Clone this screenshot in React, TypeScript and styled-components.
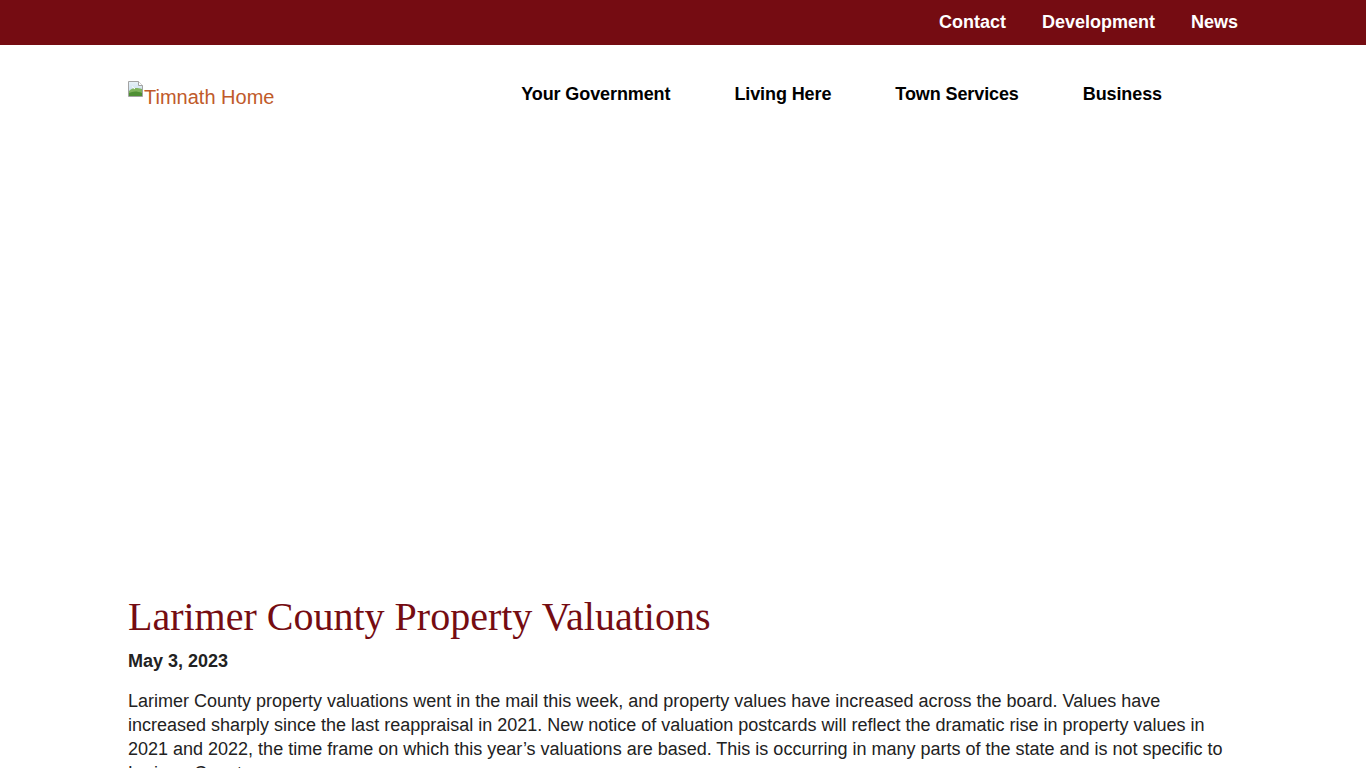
import React from 'react';
import styled, { createGlobalStyle } from 'styled-components';

const GlobalStyle = createGlobalStyle`
  html, body {
    margin: 0;
    padding: 0;
    background: #ffffff;
    font-family: 'Liberation Sans', Arial, sans-serif;
  }
  * {
    box-sizing: border-box;
  }
`;

const Container = styled.div`
  width: 1110px;
  margin: 0 auto;
`;

const TopBar = styled.div`
  height: 45px;
  background-color: #750c12;
`;

const TopLinks = styled(Container)`
  height: 100%;
  display: flex;
  justify-content: flex-end;
  align-items: center;
  gap: 36px;
  padding-bottom: 2px;
`;

const TopLink = styled.a`
  color: #ffffff;
  font-size: 18px;
  font-weight: 700;
  text-decoration: none;
  line-height: 1;
`;

const Header = styled(Container)`
  height: 95px;
  display: flex;
  align-items: flex-start;
  justify-content: space-between;
  padding-top: 36px;
`;

const Logo = styled.a`
  display: flex;
  align-items: flex-start;
  color: #c05a2a;
  font-size: 20px;
  text-decoration: none;
  line-height: 22px;
`;

const LogoAlt = styled.span`
  padding-top: 5px;
`;

const MainNav = styled.nav`
  display: flex;
  gap: 64px;
  margin-right: 76px;
  margin-top: 2px;
`;

const NavLink = styled.a`
  color: #000000;
  font-size: 18px;
  font-weight: 700;
  text-decoration: none;
  line-height: 22px;
  letter-spacing: -0.1px;
`;

const Hero = styled.div`
  height: 454px;
`;

const Article = styled(Container)`
  color: #222222;
`;

const Title = styled.h1`
  margin: 0;
  font-family: 'Liberation Serif', 'Times New Roman', serif;
  font-weight: 400;
  font-size: 40px;
  line-height: 46px;
  color: #750c12;
`;

const PostDate = styled.p`
  margin: 9px 0 0;
  font-size: 18px;
  font-weight: 700;
  line-height: 24px;
`;

const Body = styled.p`
  margin: 16px 0 0;
  font-size: 18px;
  line-height: 24px;
`;

// stand-in for the browser's missing-image glyph
const BrokenImage = () => (
  <svg width="16" height="16" viewBox="0 0 16 16" aria-hidden="true">
    <defs>
      <linearGradient id="sky" x1="0" y1="0" x2="0" y2="1">
        <stop offset="0" stopColor="#e9f2f8" />
        <stop offset="1" stopColor="#b9d4e6" />
      </linearGradient>
    </defs>
    <path d="M0.5 0.5h10l4 4v11h-14z" fill="url(#sky)" stroke="#a3a3a3" />
    <path d="M10.5 0.5v4h4" fill="#ffffff" stroke="#a3a3a3" />
    <path d="M1 10c3-3 6-4 13-2v7h-13z" fill="#7fb35c" />
    <path d="M1 12c4-2 8-2 13 0v3h-13z" fill="#4f8f34" />
    <path d="M4 5.5l3 2.5" stroke="#ffffff" strokeWidth="1" />
  </svg>
);

const topLinks = ['Contact', 'Development', 'News'];
const navItems = ['Your Government', 'Living Here', 'Town Services', 'Business'];

export default function App() {
  return (
    <>
      <GlobalStyle />
      <TopBar>
        <TopLinks>
          {topLinks.map((label) => (
            <TopLink key={label} href="#">
              {label}
            </TopLink>
          ))}
        </TopLinks>
      </TopBar>
      <Header>
        <Logo href="#">
          <BrokenImage />
          <LogoAlt>Timnath Home</LogoAlt>
        </Logo>
        <MainNav>
          {navItems.map((label) => (
            <NavLink key={label} href="#">
              {label}
            </NavLink>
          ))}
        </MainNav>
      </Header>
      <Hero />
      <Article>
        <Title>Larimer County Property Valuations</Title>
        <PostDate>May 3, 2023</PostDate>
        <Body>
          Larimer County property valuations went in the mail this week, and property values have
          increased across the board. Values have increased sharply since the last reappraisal in
          2021. New notice of valuation postcards will reflect the dramatic rise in property values
          in 2021 and 2022, the time frame on which this year’s valuations are based. This is
          occurring in many parts of the state and is not specific to Larimer County.
        </Body>
      </Article>
    </>
  );
}
